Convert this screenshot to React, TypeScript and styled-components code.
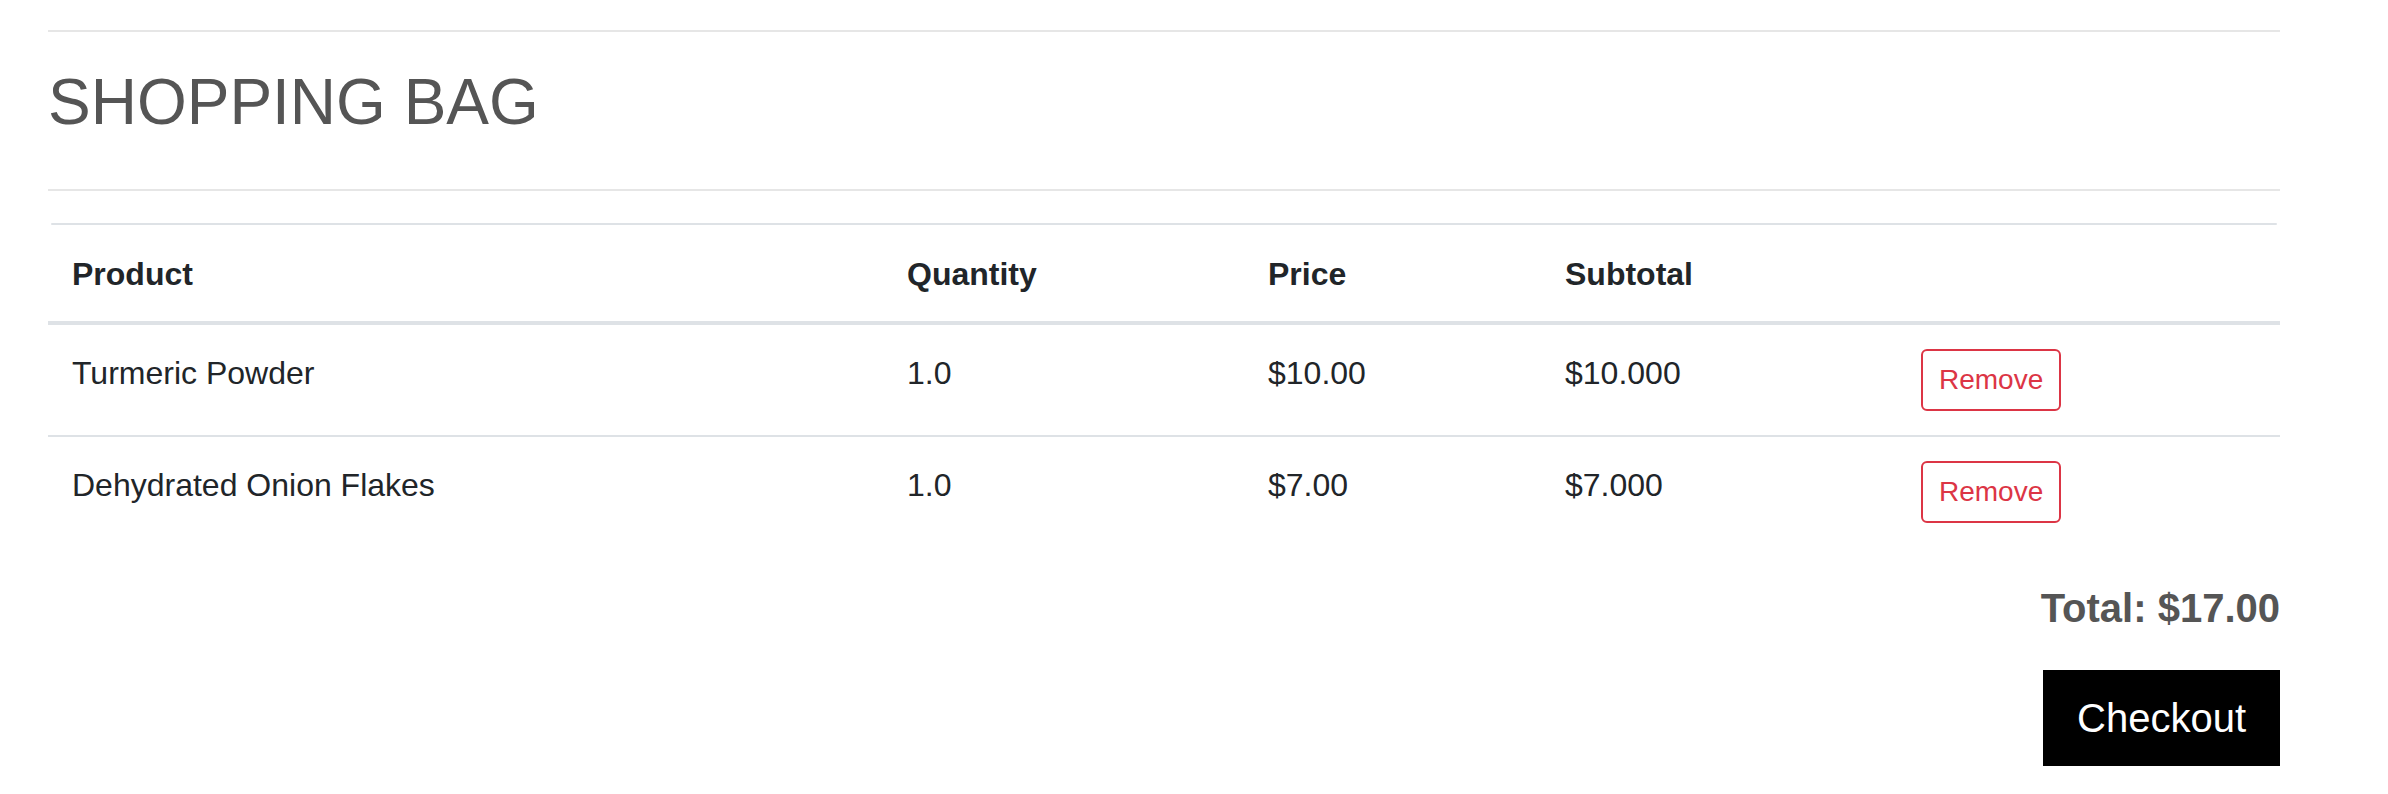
import React from 'react';
import styled, { createGlobalStyle } from 'styled-components';

const GlobalStyle = createGlobalStyle`
  html, body {
    margin: 0;
    padding: 0;
    background: #ffffff;
    font-family: "Liberation Sans", Arial, sans-serif;
    color: #212529;
  }
`;

const Page = styled.div`
  width: 2232px;
  margin-left: 48px;
  padding-bottom: 28px;
`;

const Rule = styled.hr<{ $top: number }>`
  margin: ${(p) => p.$top}px 0 0;
  border: 0;
  border-top: 2px solid #e6e6e6;
  height: 0;
`;

const Title = styled.h2`
  margin: 32px 0 48px;
  font-size: 64px;
  line-height: 76.8px;
  font-weight: 400;
  color: #555555;
`;

const TableCap = styled.div`
  margin: 32px 3px 0;
  border-top: 2px solid #dee2e6;
  border-radius: 6px;
`;

const Table = styled.table`
  width: 2232px;
  border-collapse: collapse;
  table-layout: fixed;
  font-size: 32px;
  line-height: 48px;
`;

// widths are the full column widths; padding is inside them
const HeadCell = styled.th<{ $width: number }>`
  width: ${(p) => p.$width - 48}px;
  padding: 25px 24px 23px;
  text-align: left;
  font-weight: 700;
  vertical-align: top;
  border-bottom: 4px solid #dee2e6;
`;

const Row = styled.tr`
  & + & td {
    border-top: 2px solid #dee2e6;
  }
`;

const Cell = styled.td`
  padding: 24px;
  vertical-align: top;
`;

const RemoveButton = styled.button`
  display: inline-block;
  vertical-align: top;
  box-sizing: border-box;
  height: 62px;
  padding: 8px 16px;
  font-family: inherit;
  font-size: 28px;
  line-height: 42px;
  color: #dc3545;
  background: transparent;
  border: 2px solid #dc3545;
  border-radius: 6px;
  cursor: pointer;
`;

const Summary = styled.div`
  display: flex;
  flex-direction: column;
  align-items: flex-end;
  margin-top: 37px;
  gap: 38px;
`;

const Total = styled.h5`
  margin: 0;
  font-size: 40px;
  line-height: 48px;
  font-weight: 700;
  color: #555555;
`;

const CheckoutButton = styled.button`
  padding: 18px 34px;
  font-family: inherit;
  font-size: 40px;
  line-height: 60px;
  color: #ffffff;
  background: #000000;
  border: 0;
  border-radius: 0;
  cursor: pointer;
`;

const columns = [
  { label: 'Product', width: 835 },
  { label: 'Quantity', width: 361 },
  { label: 'Price', width: 297 },
  { label: 'Subtotal', width: 356 },
  { label: '', width: 383 },
];

const items = [
  { name: 'Turmeric Powder', qty: '1.0', price: '$10.00', subtotal: '$10.000' },
  { name: 'Dehydrated Onion Flakes', qty: '1.0', price: '$7.00', subtotal: '$7.000' },
];

export default function App() {
  return (
    <>
      <GlobalStyle />
      <Page>
        <Rule $top={30} />
        <Title>SHOPPING BAG</Title>
        <Rule $top={0} />
        <TableCap />
        <Table>
          <thead>
            <tr>
              {columns.map((c) => (
                <HeadCell key={c.width} $width={c.width}>
                  {c.label}
                </HeadCell>
              ))}
            </tr>
          </thead>
          <tbody>
            {items.map((item) => (
              <Row key={item.name}>
                <Cell>{item.name}</Cell>
                <Cell>{item.qty}</Cell>
                <Cell>{item.price}</Cell>
                <Cell>{item.subtotal}</Cell>
                <Cell>
                  <RemoveButton>Remove</RemoveButton>
                </Cell>
              </Row>
            ))}
          </tbody>
        </Table>
        <Summary>
          <Total>Total: $17.00</Total>
          <CheckoutButton>Checkout</CheckoutButton>
        </Summary>
      </Page>
    </>
  );
}
